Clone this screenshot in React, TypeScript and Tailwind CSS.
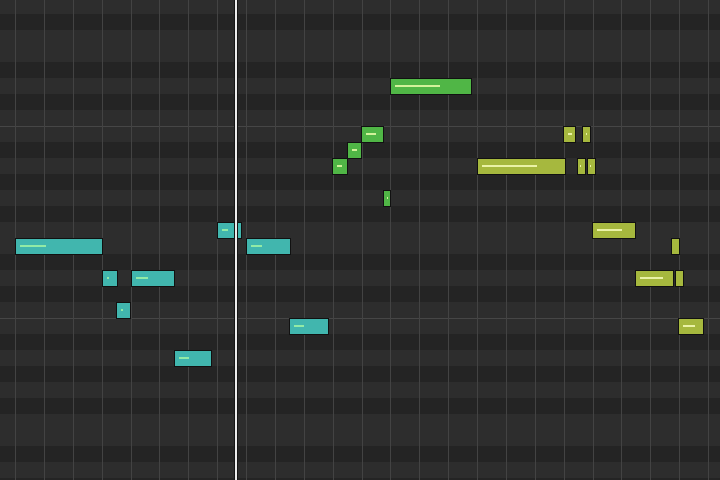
import React from "react";

type Note = { x1: number; x2: number; y: number; c: "t" | "g" | "y"; l1?: number; l2?: number };

const notes: Note[] = [
  { x1: 15, x2: 102, y: 238, c: "t", l1: 20, l2: 46 },
  { x1: 102, x2: 117, y: 270, c: "t", l1: 107, l2: 109 },
  { x1: 131, x2: 174, y: 270, c: "t", l1: 136, l2: 148 },
  { x1: 116, x2: 130, y: 302, c: "t", l1: 121, l2: 123 },
  { x1: 174, x2: 211, y: 350, c: "t", l1: 179, l2: 189 },
  { x1: 217, x2: 241, y: 222, c: "t", l1: 222, l2: 228 },
  { x1: 246, x2: 290, y: 238, c: "t", l1: 251, l2: 262 },
  { x1: 289, x2: 328, y: 318, c: "t", l1: 294, l2: 304 },
  { x1: 390, x2: 471, y: 78, c: "g", l1: 395, l2: 440 },
  { x1: 361, x2: 383, y: 126, c: "g", l1: 366, l2: 376 },
  { x1: 347, x2: 361, y: 142, c: "g", l1: 352, l2: 357 },
  { x1: 332, x2: 347, y: 158, c: "g", l1: 337, l2: 342 },
  { x1: 383, x2: 390, y: 190, c: "g", l1: 387, l2: 388 },
  { x1: 477, x2: 565, y: 158, c: "y", l1: 482, l2: 537 },
  { x1: 563, x2: 575, y: 126, c: "y", l1: 568, l2: 572 },
  { x1: 582, x2: 590, y: 126, c: "y", l1: 586, l2: 587 },
  { x1: 577, x2: 585, y: 158, c: "y", l1: 580, l2: 581 },
  { x1: 587, x2: 595, y: 158, c: "y", l1: 590, l2: 591 },
  { x1: 592, x2: 635, y: 222, c: "y", l1: 597, l2: 622 },
  { x1: 671, x2: 679, y: 238, c: "y" },
  { x1: 635, x2: 673, y: 270, c: "y", l1: 640, l2: 663 },
  { x1: 675, x2: 683, y: 270, c: "y" },
  { x1: 678, x2: 703, y: 318, c: "y", l1: 683, l2: 695 },
];

const fill: Record<string, string> = {
  t: "bg-[#41b6ae]",
  g: "bg-[#50b646]",
  y: "bg-[#a6b83e]",
};
const line: Record<string, string> = {
  t: "bg-[#92eaa6]",
  g: "bg-[#d2f29a]",
  y: "bg-[#eaf2a6]",
};

// pattern from top: d = dark (black key), o = octave line above the row
type Row = { h: number; d: boolean; o?: boolean };
const rows: Row[] = [
  { h: 14, d: false },
  ...[true, false, false, true, false, true, false].map((d) => ({ h: 16, d })),
  { h: 16, d: false, o: true },
  ...[true, false, true, false, true, false, false, true, false, true, false].map((d) => ({ h: 16, d })),
  { h: 16, d: false, o: true },
  ...[true, false, true, false, true, false, false, true, false].map((d) => ({ h: 16, d })),
  { h: 2, d: true },
];

const cols = Array.from({ length: 25 }, (_, k) => k);

export default function App() {
  return (
    <div className="relative w-[720px] h-[480px] overflow-hidden bg-[#2d2d2d]">
      <div className="flex flex-col">
        {rows.map((r, i) => (
          <div
            key={i}
            className={`shrink-0 ${r.d ? "bg-[#242424]" : "bg-[#2d2d2d]"} ${r.o ? "border-t border-[#464646]" : ""}`}
            style={{ height: r.h }}
          />
        ))}
      </div>
      <div className="absolute inset-0 flex pl-[15px]">
        {cols.map((k) => (
          <div key={k} className="h-full w-[28.875px] shrink-0 border-l border-[#434343]" />
        ))}
      </div>
      {notes.map((n, i) => (
        <div
          key={i}
          className={`absolute border border-[#111111] ${fill[n.c]}`}
          style={{ left: n.x1, top: n.y, width: n.x2 - n.x1 + 1, height: 17 }}
        >
          {n.l1 !== undefined && n.l2 !== undefined && (
            <div
              className={`absolute h-[2px] ${line[n.c]}`}
              style={{ left: n.l1 - n.x1 - 1, top: 6, width: n.l2 - n.l1 }}
            />
          )}
        </div>
      ))}
      <div className="absolute top-0 left-[234px] h-full w-[4px] bg-[#ececec] border-x border-[#151515]" />
    </div>
  );
}
